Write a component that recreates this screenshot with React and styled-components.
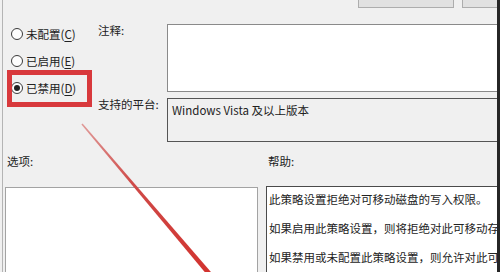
import React from "react";
import styled, { createGlobalStyle } from "styled-components";

const GlobalStyle = createGlobalStyle`
  html, body {
    margin: 0;
    padding: 0;
    background: #f0f0f0;
  }
  body {
    font-family: "Noto Sans CJK SC", "Noto Sans", sans-serif;
  }
`;

// window frame
const Frame = styled.div`
  position: relative;
  display: flex;
  width: 500px;
  height: 272px;
  padding-left: 2px;
  box-sizing: border-box;
  overflow: hidden;
  background: #f0f0f0;
  color: #222;
  font-size: 11.5px;
`;

const Main = styled.div`
  flex: 1;
  min-width: 0;
  display: flex;
  flex-direction: column;
  border-left: 1px solid #b4b4b4;
  overflow: hidden;
  & > * {
    flex-shrink: 0;
  }
`;

const EdgeBar = styled.div`
  flex: 0 0 3px;
  background: #262626;
`;

/* top buttons (cut off by the crop) */
const TopBar = styled.div`
  display: flex;
  align-items: flex-end;
  gap: 8px;
  height: 8px;
  padding-left: 355px;
  overflow: hidden;
`;

const NavButton = styled.button`
  flex: 0 0 96px;
  height: 27px;
  box-sizing: border-box;
  border: 1px solid #adadad;
  background: #e1e1e1;
  color: #222;
  font: inherit;
  line-height: 21px;
  padding: 0 0 4px;
  white-space: nowrap;
`;

/* state + comment + platform */
const Upper = styled.div`
  display: grid;
  grid-template-columns: 95px 69px 1fr;
  grid-template-rows: 68px 44px;
  row-gap: 6px;
  margin-top: 16px;
  margin-right: -4px;
`;

const RadioGroup = styled.div`
  grid-row: 1 / span 2;
  display: flex;
  flex-direction: column;
  gap: 7px;
  padding-left: 8px;
`;

const RadioItem = styled.label`
  display: flex;
  align-items: center;
  gap: 3px;
  height: 20px;
  white-space: nowrap;
  & u {
    text-decoration-thickness: 1px;
    text-underline-offset: 2px;
  }
`;

const RadioDot = styled.span`
  position: relative;
  flex: 0 0 12px;
  height: 12px;
  box-sizing: border-box;
  border: 1px solid #3a3a3a;
  border-radius: 50%;
  background: #fdfdfd;
  &::after {
    content: "";
    display: ${(p) => (p.$checked ? "block" : "none")};
    position: absolute;
    left: 2px;
    top: 2px;
    width: 6px;
    height: 6px;
    border-radius: 50%;
    background: #222;
  }
`;

const FieldLabel = styled.div`
  line-height: 13px;
  white-space: nowrap;
`;

const TextBox = styled.div`
  box-sizing: border-box;
  border: 1px solid ${(p) => (p.$readOnly ? "#555" : "#8a8a8a")};
  background: ${(p) => (p.$readOnly ? "#f0f0f0" : "#fff")};
  padding: 5px 4px;
  line-height: 13px;
  white-space: nowrap;
`;

/* options + help */
const Lower = styled.div`
  display: grid;
  grid-template-columns: 253px 1fr;
  grid-template-rows: 13px 100px;
  column-gap: 8px;
  row-gap: 19px;
  margin-top: 13px;
  margin-right: -4px;
  padding-left: 2px;
`;

const PaneLabel = styled.div`
  line-height: 13px;
  padding-left: 2px;
`;

const OptionsBox = styled.div`
  box-sizing: border-box;
  border: 1px solid #a3a3a3;
  background: #fff;
`;

const HelpBox = styled.div`
  box-sizing: border-box;
  margin-top: -1px;
  border: 1px solid #4a4a4a;
  background: #fff;
  padding: 6px 2px;
  white-space: nowrap;
  overflow: hidden;
  & p {
    margin: 0 0 16px;
    line-height: 13px;
  }
`;

/* annotations drawn over the screenshot */
const Highlight = styled.div`
  position: absolute;
  left: 7px;
  top: 70px;
  width: 85px;
  height: 37px;
  box-sizing: border-box;
  border: 5px solid #d8393c;
  pointer-events: none;
`;

const ArrowLayer = styled.svg`
  position: absolute;
  left: 0;
  top: 0;
  pointer-events: none;
`;

const radios = [
  { text: "未配置", key: "C" },
  { text: "已启用", key: "E" },
  { text: "已禁用", key: "D", checked: true },
];

const helpLines = [
  "此策略设置拒绝对可移动磁盘的写入权限。",
  "如果启用此策略设置，则将拒绝对此可移动存储类的写入访问权限。",
  "如果禁用或未配置此策略设置，则允许对此可移动存储类的写入访问权限。",
];

const App = () => {
  return (
    <>
      <GlobalStyle />
      <Frame>
        <Main>
          <TopBar>
            <NavButton>上一个设置(P)</NavButton>
            <NavButton>下一个设置(N)</NavButton>
          </TopBar>

          <Upper>
            <RadioGroup>
              {radios.map((r) => (
                <RadioItem key={r.key}>
                  <RadioDot $checked={r.checked} />
                  <span>
                    {r.text}(<u>{r.key}</u>)
                  </span>
                </RadioItem>
              ))}
            </RadioGroup>
            <FieldLabel>注释:</FieldLabel>
            <TextBox />
            <FieldLabel>支持的平台:</FieldLabel>
            <TextBox $readOnly>Windows Vista 及以上版本</TextBox>
          </Upper>

          <Lower>
            <PaneLabel>选项:</PaneLabel>
            <PaneLabel>帮助:</PaneLabel>
            <OptionsBox />
            <HelpBox>
              {helpLines.map((line) => (
                <p key={line}>{line}</p>
              ))}
            </HelpBox>
          </Lower>
        </Main>
        <EdgeBar />

        <Highlight />
        <ArrowLayer width="500" height="272" viewBox="0 0 500 272">
          <defs>
            <linearGradient id="arrowFade" x1="82" y1="124" x2="210" y2="272" gradientUnits="userSpaceOnUse">
              <stop offset="0" stopColor="#e09a98" />
              <stop offset="0.4" stopColor="#cf4a48" />
              <stop offset="1" stopColor="#d2332f" />
            </linearGradient>
          </defs>
          <polygon
            points="82.6,123.6 213.2,274.6 209.2,277.4 81.4,124.4"
            fill="url(#arrowFade)"
          />
        </ArrowLayer>
      </Frame>
    </>
  );
};

export default App;
